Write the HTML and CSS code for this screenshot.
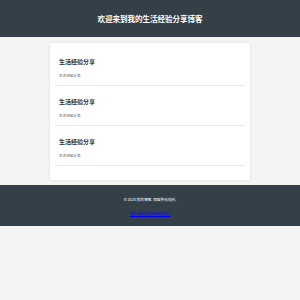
FILE: index.html
```html
<!DOCTYPE html>
<html lang="zh-CN">
<head>
    <meta charset="UTF-8">
    <meta name="viewport" content="width=device-width, initial-scale=1.0">
    <title>生活经验分享博客</title>
    <link rel="stylesheet" href="styles.css">
</head>
<body>
    <header class="site-header">
        <h1>欢迎来到我的生活经验分享博客</h1>
    </header>
    <main class="container">
        <div class="post">
            <h2>生活经验分享</h2>
            <p>生活经验分享</p>
        </div>
        <div class="post">
            <h2>生活经验分享</h2>
            <p>生活经验分享</p>
        </div>
        <div class="post">
            <h2>生活经验分享</h2>
            <p>生活经验分享</p>
        </div>
    </main>
    <footer class="site-footer">
        <p>&copy; 2024 我的博客. 保留所有权利.</p>
        <p><a href="#">辽ICP备2023XXXXXX号-1</a></p>
    </footer>
</body>
</html>
```

FILE: styles.css
```css
body {
    font-family: "Noto Sans CJK SC", "Liberation Sans", sans-serif;
    margin: 0;
    padding: 0;
    background-color: #f4f4f4;
}

.site-header {
    height: 37px;
    background-color: #353f47;
    color: #fff;
    display: flex;
    align-items: center;
    justify-content: center;
}

.site-header h1 {
    margin: 0;
    font-size: 7.5px;
    line-height: 10px;
}

.container {
    width: 200px;
    margin: 6px auto 0;
    padding: 7px 5px 10px;
    box-sizing: border-box;
    background-color: #fff;
    box-shadow: 0 0 3px rgba(0, 0, 0, 0.1);
}

.post {
    padding: 8px 4px 7px;
    margin-bottom: 4px;
    border-bottom: 1px solid #e8e8e8;
}

.post h2 {
    margin: 0 0 8px;
    font-size: 6px;
    line-height: 8px;
    color: #333;
}

.post p {
    margin: 0;
    font-size: 3.6px;
    line-height: 4px;
    color: #555;
}

.site-footer {
    margin-top: 5px;
    padding: 13px 0 10px;
    background-color: #353f47;
    color: #fff;
    text-align: center;
    box-shadow: 0 1px 1px rgba(0, 0, 0, 0.15);
}

.site-footer p {
    margin: 0;
    font-size: 3.7px;
    line-height: 4px;
}

.site-footer p + p {
    margin-top: 10px;
}

.site-footer a {
    color: #0000ee;
}
```
